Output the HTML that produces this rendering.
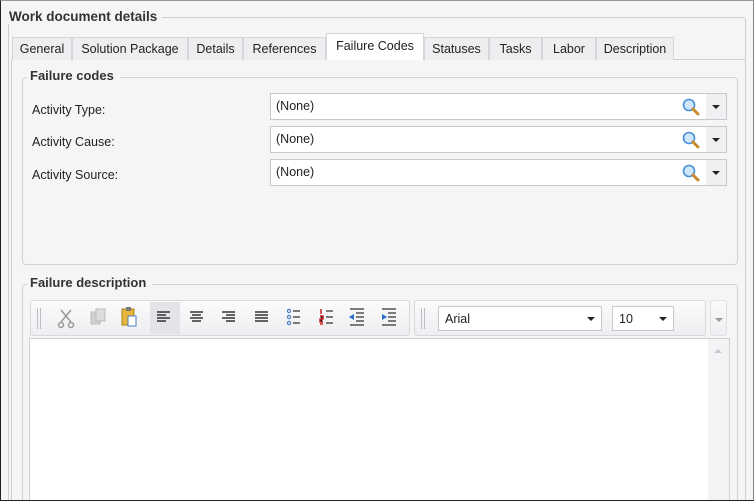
<!DOCTYPE html>
<html style="width:754px;height:501px;overflow:hidden"><head><meta charset="utf-8"><style>
*{box-sizing:border-box;margin:0;padding:0}
body{width:754px;height:501px;overflow:hidden;background:#f5f5f6;font-family:"Liberation Sans","DejaVu Sans",sans-serif;font-size:12.5px;color:#222;position:relative}
.a{position:absolute}
.frame{left:0;top:0;width:754px;height:501px;border:1px solid #222;border-right-color:#888;border-top-color:#999}
.t{white-space:nowrap}
.bold{font-weight:bold;color:#333;font-size:13px}
.tab{position:absolute;top:37px;height:23px;border:1px solid #d6d6da;border-bottom:none;background:#eeeef0;padding:4px 0 0;text-align:center;font-size:12.5px}
.inp{position:absolute;left:270px;width:457px;height:27px;background:#fff;border:1px solid #c8c8cc}
.inp span{position:absolute;left:5px;top:5px}
.dd{position:absolute;right:0;top:0;width:20px;height:25px;background:#f0f0f2}
.tri{position:absolute;width:0;height:0;border-left:4px solid transparent;border-right:4px solid transparent;border-top:4px solid #222}
.lbl{position:absolute;left:32px}
</style></head><body>
<div class="a" style="left:8px;top:17px;width:738px;height:484px;border:1px solid #cfcfd3;border-bottom:none;border-radius:3px 3px 0 0"></div>
<div class="a bold t" style="left:7px;top:9px;background:#f5f5f6;padding:0 5px 0 2px;font-size:13.5px">Work document details</div>

<div class="a" style="left:11px;top:59px;width:735px;height:442px;border:1px solid #d0d0d4;border-bottom:none;background:#f5f5f6"></div>
<div class="tab" style="left:12px;width:60px">General</div>
<div class="tab" style="left:72px;width:116px">Solution Package</div>
<div class="tab" style="left:188px;width:55px">Details</div>
<div class="tab" style="left:243px;width:83px">References</div>
<div class="tab" style="left:326px;top:33px;height:27px;width:98px;background:#fff;padding-top:5px">Failure Codes</div>
<div class="tab" style="left:424px;width:65px">Statuses</div>
<div class="tab" style="left:489px;width:53px">Tasks</div>
<div class="tab" style="left:542px;width:54px">Labor</div>
<div class="tab" style="left:596px;width:78px">Description</div>

<div class="a" style="left:22px;top:77px;width:716px;height:188px;border:1px solid #d2d2d6;border-radius:4px"></div>
<div class="a bold t" style="left:27px;top:68px;background:#f5f5f6;padding:0 6px 0 3px">Failure codes</div>

<div class="lbl t" style="top:103px">Activity Type:</div>
<div class="lbl t" style="top:135px">Activity Cause:</div>
<div class="lbl t" style="top:168px">Activity Source:</div>

<div class="inp" style="top:93px"><span>(None)</span><svg class="a" style="left:410px;top:4px" width="20" height="20"><circle cx="8" cy="7" r="5.5" fill="#cfe6fb" stroke="#4a8fd9" stroke-width="1.6"/><path d="M12 11 L17 16" stroke="#c98a2c" stroke-width="3" stroke-linecap="round"/></svg><div class="dd"><div class="tri" style="left:6px;top:11px"></div></div></div>
<div class="inp" style="top:126px"><span>(None)</span><svg class="a" style="left:410px;top:4px" width="20" height="20"><circle cx="8" cy="7" r="5.5" fill="#cfe6fb" stroke="#4a8fd9" stroke-width="1.6"/><path d="M12 11 L17 16" stroke="#c98a2c" stroke-width="3" stroke-linecap="round"/></svg><div class="dd"><div class="tri" style="left:6px;top:11px"></div></div></div>
<div class="inp" style="top:159px"><span>(None)</span><svg class="a" style="left:410px;top:4px" width="20" height="20"><circle cx="8" cy="7" r="5.5" fill="#cfe6fb" stroke="#4a8fd9" stroke-width="1.6"/><path d="M12 11 L17 16" stroke="#c98a2c" stroke-width="3" stroke-linecap="round"/></svg><div class="dd"><div class="tri" style="left:6px;top:11px"></div></div></div>

<div class="a" style="left:22px;top:284px;width:716px;height:217px;border:1px solid #d2d2d6;border-bottom:none;border-radius:4px 4px 0 0"></div>
<div class="a bold t" style="left:27px;top:275px;background:#f5f5f6;padding:0 6px 0 3px">Failure description</div>

<div class="a" style="left:30px;top:300px;width:380px;height:36px;border:1px solid #d8d8dc;border-radius:3px;background:linear-gradient(#fbfbfc,#eeeef1)"></div>
<div class="a" style="left:37px;top:308px;height:21px;border-left:1px solid #c0c0c4;border-right:1px solid #c0c0c4;width:4px"></div>
<div class="a" style="left:150px;top:302px;width:30px;height:32px;background:#e3e3e8"></div>
<svg class="a" style="left:30px;top:300px" width="380" height="36">
<g stroke="#999" fill="none" stroke-width="1.5"><path d="M31 10 L41 22 M41 10 L31 22"/><circle cx="31" cy="25" r="2.5"/><circle cx="41" cy="25" r="2.5"/></g>
<rect x="61" y="12" width="9" height="12" fill="#d0d0d0" stroke="#bbb"/><rect x="66" y="9" width="9" height="12" fill="#ddd" stroke="#bbb"/>
<rect x="92" y="9" width="12" height="16" fill="#e8b63a" stroke="#a9801c"/><rect x="96" y="7" width="5" height="4" fill="#777"/><rect x="98" y="16" width="8" height="10" fill="#fff" stroke="#4a7fc0"/>
<g stroke="#333" stroke-width="1.4"><path d="M127 12h13M127 15h9M127 18h13M127 21h9"/><path d="M160 12h13M162 15h9M160 18h13M162 21h9"/><path d="M192 12h13M196 15h9M192 18h13M196 21h9"/><path d="M225 12h13M225 15h13M225 18h13M225 21h13"/></g>
<g fill="none" stroke="#4a7fc0" stroke-width="1.2"><circle cx="259" cy="11" r="1.6"/><circle cx="259" cy="17" r="1.6"/><circle cx="259" cy="23" r="1.6"/></g>
<g stroke="#333" stroke-width="1.3"><path d="M263 11h7M263 17h7M263 23h7M296 11h7M296 17h7M296 23h7"/></g>
<g stroke="#c22" stroke-width="1.5"><path d="M291 9v5M290 16h3v3h-3v3h3M290 24h3"/></g>
<g stroke="#333" stroke-width="1.3"><path d="M320 9h14M326 13h8M326 17h8M326 21h8M320 25h14M352 9h14M358 13h8M358 17h8M358 21h8M352 25h14"/></g>
<path d="M319 17l5-3v6z" fill="#2a6fc9"/><path d="M357 17l-5-3v6z" fill="#2a6fc9"/>
</svg>

<div class="a" style="left:414px;top:300px;width:292px;height:36px;border:1px solid #d8d8dc;border-radius:3px;background:linear-gradient(#fbfbfc,#eeeef1)"></div>
<div class="a" style="left:421px;top:308px;height:21px;border-left:1px solid #c0c0c4;border-right:1px solid #c0c0c4;width:4px"></div>
<div class="a" style="left:438px;top:306px;width:164px;height:25px;background:#fff;border:1px solid #c8c8cc"><span class="a t" style="left:6px;top:5px">Arial</span><div class="tri" style="left:148px;top:10px"></div></div>
<div class="a" style="left:612px;top:306px;width:62px;height:25px;background:#fff;border:1px solid #c8c8cc"><span class="a t" style="left:6px;top:5px">10</span><div class="tri" style="left:46px;top:10px"></div></div>
<div class="a" style="left:710px;top:300px;width:17px;height:36px;border-radius:3px;background:linear-gradient(#fbfbfc,#eeeef1);border:1px solid #e0e0e4"><div class="tri" style="left:4px;top:17px;border-top-color:#999"></div></div>

<div class="a" style="left:29px;top:338px;width:701px;height:163px;background:#fff;border:1px solid #cfcfd4;border-bottom:none"></div>
<div class="a" style="left:708px;top:339px;width:21px;height:162px;background:#f3f3f5"><div class="a" style="left:6px;top:10px;width:0;height:0;border-left:4px solid transparent;border-right:4px solid transparent;border-bottom:4px solid #c8c8cc"></div></div>

<div class="a frame"></div>
</body></html>
